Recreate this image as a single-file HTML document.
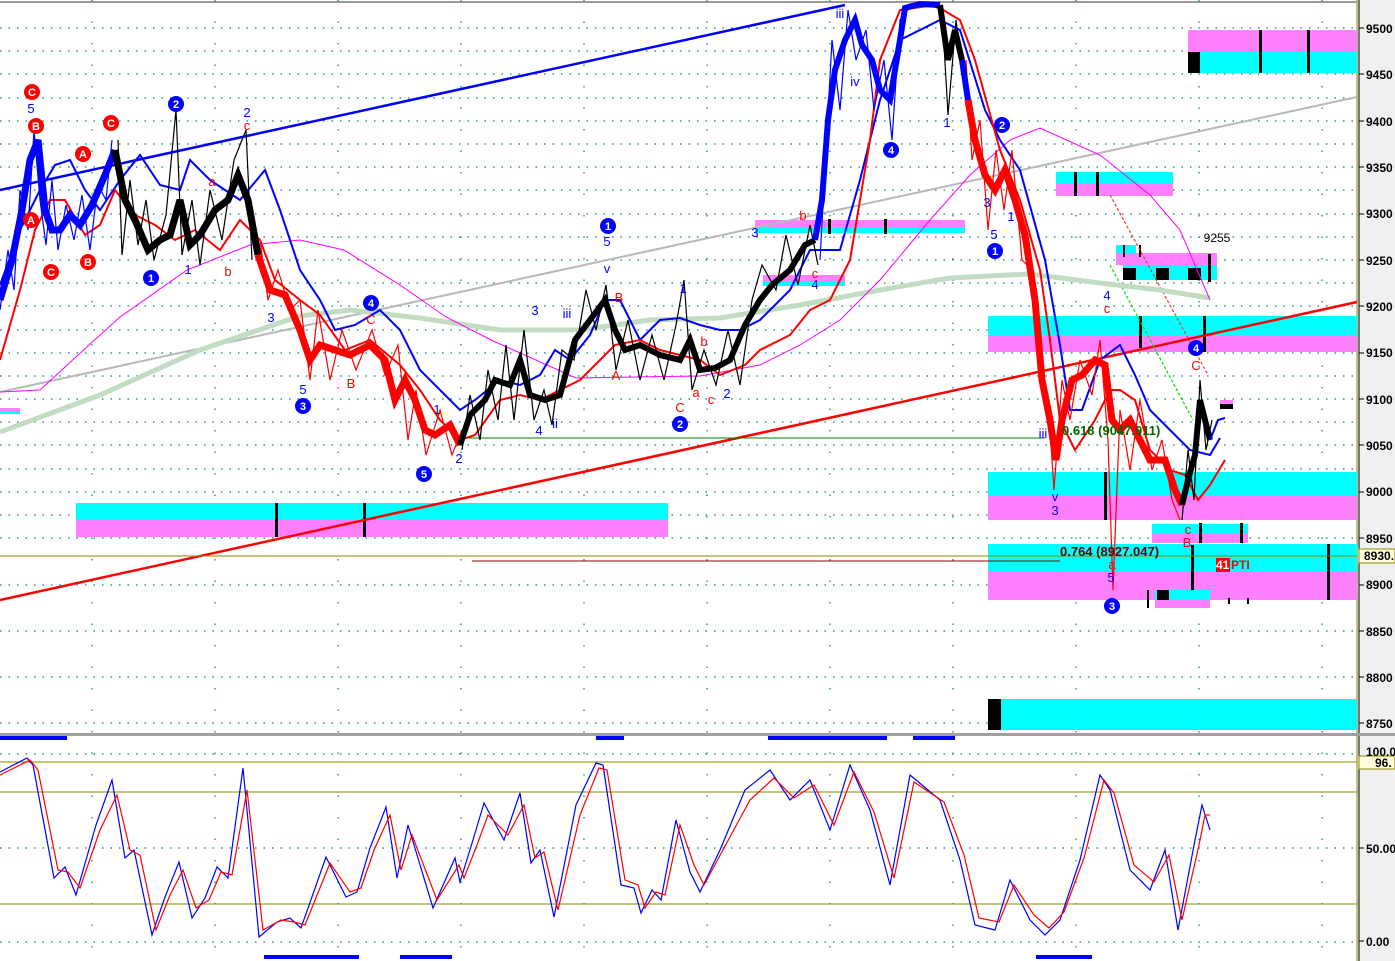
<!DOCTYPE html>
<html><head><meta charset="utf-8"><style>
html,body{margin:0;padding:0;background:#fff;}
svg{display:block;font-family:"Liberation Sans",sans-serif;}
</style></head><body>
<svg width="1395" height="961" viewBox="0 0 1395 961" xmlns="http://www.w3.org/2000/svg">
<rect width="1395" height="961" fill="#fff"/>
<rect x="1357" y="0" width="38" height="961" fill="#f0f0f0"/>
<line x1="1357" y1="0" x2="1357" y2="961" stroke="#8a8a00" stroke-width="1"/>
<line x1="1359" y1="0" x2="1359" y2="961" stroke="#000" stroke-width="1"/>
<line x1="0" y1="2" x2="1357" y2="2" stroke="#999" stroke-width="2"/>
<g stroke="#008080" stroke-width="1.2" stroke-dasharray="1.5 7">
<line x1="0" y1="28" x2="1357" y2="28"/><line x1="0" y1="51" x2="1357" y2="51"/>
<line x1="0" y1="74" x2="1357" y2="74"/><line x1="0" y1="98" x2="1357" y2="98"/>
<line x1="0" y1="121" x2="1357" y2="121"/><line x1="0" y1="144" x2="1357" y2="144"/>
<line x1="0" y1="167" x2="1357" y2="167"/><line x1="0" y1="190" x2="1357" y2="190"/>
<line x1="0" y1="214" x2="1357" y2="214"/><line x1="0" y1="237" x2="1357" y2="237"/>
<line x1="0" y1="260" x2="1357" y2="260"/><line x1="0" y1="283" x2="1357" y2="283"/>
<line x1="0" y1="306" x2="1357" y2="306"/><line x1="0" y1="330" x2="1357" y2="330"/>
<line x1="0" y1="353" x2="1357" y2="353"/><line x1="0" y1="376" x2="1357" y2="376"/>
<line x1="0" y1="399" x2="1357" y2="399"/><line x1="0" y1="422" x2="1357" y2="422"/>
<line x1="0" y1="445" x2="1357" y2="445"/><line x1="0" y1="469" x2="1357" y2="469"/>
<line x1="0" y1="492" x2="1357" y2="492"/><line x1="0" y1="515" x2="1357" y2="515"/>
<line x1="0" y1="538" x2="1357" y2="538"/><line x1="0" y1="585" x2="1357" y2="585"/>
<line x1="0" y1="631" x2="1357" y2="631"/><line x1="0" y1="677" x2="1357" y2="677"/>
<line x1="0" y1="723" x2="1357" y2="723"/>
<line x1="0" y1="754" x2="1357" y2="754"/><line x1="0" y1="848" x2="1357" y2="848"/><line x1="0" y1="942" x2="1357" y2="942"/>
</g>
<g stroke="#008080" stroke-width="1.2" stroke-dasharray="1.5 20">
<line x1="92" y1="0" x2="92" y2="961"/><line x1="215" y1="0" x2="215" y2="961"/>
<line x1="338" y1="0" x2="338" y2="961"/><line x1="461" y1="0" x2="461" y2="961"/>
<line x1="584" y1="0" x2="584" y2="961"/><line x1="707" y1="0" x2="707" y2="961"/>
<line x1="830" y1="0" x2="830" y2="961"/><line x1="953" y1="0" x2="953" y2="961"/>
<line x1="1076" y1="0" x2="1076" y2="961"/><line x1="1199" y1="0" x2="1199" y2="961"/>
<line x1="1322" y1="0" x2="1322" y2="961"/>
</g>
<g>
<rect x="1188" y="30" width="169" height="22" fill="#ff80ff"/><rect x="1188" y="52" width="169" height="21" fill="#00ffff"/>
<rect x="1188" y="52" width="12" height="21" fill="#000"/>
<rect x="1259" y="30" width="3" height="43" fill="#000"/><rect x="1307" y="30" width="3" height="43" fill="#000"/>
<rect x="1056" y="172" width="117" height="12" fill="#00ffff"/><rect x="1056" y="184" width="117" height="12" fill="#ff80ff"/>
<rect x="1074" y="172" width="3" height="24" fill="#000"/><rect x="1096" y="172" width="3" height="24" fill="#000"/>
<rect x="755" y="220" width="210" height="7" fill="#ff80ff"/><rect x="755" y="227" width="210" height="6" fill="#00ffff"/>
<rect x="884" y="219" width="3" height="15" fill="#000"/><rect x="828" y="219" width="3" height="15" fill="#000"/>
<rect x="763" y="275" width="82" height="6" fill="#ff80ff"/><rect x="763" y="281" width="82" height="5" fill="#00ffff"/>
<rect x="1116" y="245" width="20" height="8" fill="#00ffff"/><rect x="1116" y="253" width="101" height="12" fill="#ff80ff"/><rect x="1123" y="265" width="94" height="15" fill="#00ffff"/>
<rect x="1123" y="268" width="13" height="12" fill="#000"/><rect x="1156" y="268" width="13" height="12" fill="#000"/><rect x="1188" y="268" width="13" height="12" fill="#000"/>
<rect x="1123" y="245" width="2" height="12" fill="#000"/><rect x="1139" y="245" width="2" height="12" fill="#000"/><rect x="1208" y="254" width="3" height="28" fill="#000"/>
<rect x="988" y="316" width="369" height="19" fill="#00ffff"/><rect x="988" y="335" width="369" height="17" fill="#ff80ff"/>
<rect x="1139" y="316" width="3" height="32" fill="#000"/><rect x="1203" y="316" width="3" height="36" fill="#000"/>
<rect x="0" y="408" width="20" height="4" fill="#ff80ff"/><rect x="0" y="412" width="20" height="2" fill="#00ffff"/>
<rect x="1220" y="400" width="13" height="4" fill="#ff80ff"/><rect x="1220" y="404" width="13" height="5" fill="#000"/>
<rect x="988" y="472" width="369" height="24" fill="#00ffff"/><rect x="988" y="496" width="369" height="24" fill="#ff80ff"/>
<rect x="1104" y="472" width="3" height="48" fill="#000"/>
<rect x="76" y="503" width="592" height="17" fill="#00ffff"/><rect x="76" y="520" width="592" height="17" fill="#ff80ff"/>
<rect x="275" y="503" width="3" height="34" fill="#000"/><rect x="363" y="503" width="3" height="34" fill="#000"/>
<rect x="1152" y="524" width="96" height="10" fill="#00ffff"/><rect x="1152" y="534" width="96" height="9" fill="#ff80ff"/>
<rect x="1199" y="523" width="3" height="20" fill="#000"/><rect x="1240" y="523" width="3" height="20" fill="#000"/>
<rect x="988" y="544" width="369" height="27" fill="#00ffff"/><rect x="988" y="571" width="369" height="29" fill="#ff80ff"/>
<rect x="1327" y="544" width="3" height="56" fill="#000"/><rect x="1191" y="545" width="3" height="45" fill="#000"/>
<rect x="1155" y="590" width="55" height="10" fill="#00ffff"/><rect x="1155" y="600" width="55" height="8" fill="#ff80ff"/>
<rect x="1157" y="590" width="12" height="10" fill="#000"/><rect x="1147" y="590" width="2" height="18" fill="#000"/>
<rect x="1228" y="598" width="2" height="6" fill="#000"/><rect x="1247" y="598" width="2" height="6" fill="#000"/>
<rect x="988" y="699" width="369" height="31" fill="#00ffff"/><rect x="988" y="699" width="13" height="31" fill="#000"/>
</g>
<line x1="0" y1="190" x2="845" y2="5" stroke="#0000ff" stroke-width="2.5"/>
<line x1="0" y1="392" x2="1357" y2="97" stroke="#b8b8b8" stroke-width="2"/>
<line x1="0" y1="600" x2="1357" y2="302" stroke="#ff0000" stroke-width="2.5"/>
<line x1="0" y1="556" x2="1357" y2="556" stroke="#8a8a00" stroke-width="1"/>
<line x1="472" y1="561" x2="1060" y2="561" stroke="#8b0000" stroke-width="1"/>
<line x1="460" y1="438" x2="1045" y2="438" stroke="#008000" stroke-width="1"/>
<line x1="1110" y1="195" x2="1208" y2="375" stroke="#ff3030" stroke-width="1.2" stroke-dasharray="3 2"/>
<line x1="1110" y1="265" x2="1193" y2="420" stroke="#00dd00" stroke-width="1.2" stroke-dasharray="3 2"/>
<polyline fill="none" stroke="#c2dcc2" stroke-width="5" points="0,432 100,395 200,350 300,316 350,310 420,318 500,330 580,330 650,320 720,318 800,305 880,290 950,278 1030,274 1100,283 1160,290 1210,298"/>
<polyline fill="none" stroke="#ff00ff" stroke-width="1" points="0,392 40,390 89,345 120,317 187,270 250,245 300,240 344,250 400,285 446,317 491,340 576,378 700,376 760,365 800,345 840,320 880,280 930,220 970,175 1010,140 1040,128 1100,155 1150,195 1180,230 1210,300"/>
<polyline fill="none" stroke="#0000ff" stroke-width="2" points="0,285 20,230 40,190 55,165 70,160 85,190 100,210 120,180 140,155 160,185 180,190 190,160 210,180 240,200 265,170 280,210 300,270 320,300 335,330 355,325 380,310 400,330 420,370 440,390 460,410 475,400 500,380 520,385 540,375 555,350 570,360 590,335 605,300 620,300 640,340 660,320 680,318 700,325 720,330 740,330 760,320 790,290 810,250 840,250 860,180 880,100 900,40 940,20 960,30 985,110 1000,140 1020,170 1045,260 1060,345 1070,410 1082,410 1100,360 1120,345 1135,375 1150,410 1170,430 1190,450 1210,455 1220,438"/>
<polyline fill="none" stroke="#ff0000" stroke-width="2" points="0,360 20,290 35,230 50,200 65,200 85,235 100,225 115,190 135,215 155,225 175,240 195,230 220,250 240,220 260,240 275,280 300,300 320,315 345,350 370,340 400,365 420,390 440,420 460,440 475,435 500,400 520,395 540,400 560,390 580,380 600,360 615,345 640,340 660,350 700,360 720,375 745,365 760,350 790,335 810,310 830,300 850,260 870,140 880,60 900,10 935,5 960,20 975,60 1000,150 1020,200 1040,270 1050,340 1060,420 1075,450 1095,420 1110,390 1120,390 1135,400 1150,450 1170,470 1185,475 1198,500 1210,485 1225,460"/>
<!-- price wicks (thin, wide range) -->
<g fill="none" stroke-width="1.2">
<polyline stroke="#0000ff" points="0,310 8,250 14,290 20,190 28,230 34,130 40,200 46,245 52,180 58,250 66,205 74,240 82,195 90,250 98,185 106,200 112,140"/>
<polyline stroke="#000" points="118,140 122,255 130,180 138,245 146,200 154,260 166,215 176,110 182,255 192,200 200,265 210,190 222,240 234,160 246,130 252,260"/>
<polyline stroke="#ff0000" points="260,240 268,300 278,270 290,310 300,300 310,380 318,310 330,380 342,330 356,370 372,330 385,375 398,345 408,440 416,390 426,455 440,410 452,455 462,430"/>
<polyline stroke="#000" points="462,450 470,395 480,440 488,370 498,420 506,345 514,420 524,330 534,420 544,390 552,425 562,350 574,360 586,290 596,330 606,285 616,370 628,320 640,380 652,335 664,380 676,325 684,280 692,390 704,350 716,385 728,330 740,385 752,300 762,265 776,290 786,235 798,285 810,225 818,265"/>
<polyline stroke="#0000ff" points="820,260 826,150 832,40 840,110 848,10 856,60 866,30 874,110 884,60 892,140 900,20 910,4 925,4 938,8"/>
<polyline stroke="#000" points="942,10 948,115 956,20 962,70"/>
<polyline stroke="#ff0000" points="966,60 972,160 980,120 988,230 996,150 1004,210 1012,150 1022,260 1032,270 1040,380 1048,400 1054,490 1062,380 1070,420 1080,360 1092,395 1100,340 1108,440 1113,590 1120,410 1130,470 1140,400 1152,470 1162,440 1172,500 1180,520"/>
<polyline stroke="#000" points="1182,520 1188,450 1194,500 1200,380 1206,450 1212,420"/>
</g>
<!-- price bodies (approximation) -->
<polyline fill="none" stroke="#0000ff" stroke-width="7" points="0,300 12,260 22,210 30,160 38,140 45,210 52,230 60,230 70,215 80,225 92,205 105,175 115,150"/>
<polyline fill="none" stroke="#000" stroke-width="7" points="115,150 125,200 135,220 148,250 160,240 170,235 180,200 190,245 200,235 215,210 228,200 238,175 248,200 258,255"/>
<polyline fill="none" stroke="#ff0000" stroke-width="7" points="258,255 270,290 285,295 300,330 310,360 320,345 335,350 350,355 370,345 385,360 395,400 405,380 415,400 425,430 435,435 450,425 460,445"/>
<polyline fill="none" stroke="#000" stroke-width="6" points="460,445 470,415 485,400 495,380 510,385 520,360 530,395 545,400 560,395 575,340 590,320 605,300 615,330 625,350 640,345 660,355 680,360 690,340 700,370 715,368 730,360 745,325 760,300 772,285 790,270 805,245 815,240"/>
<polyline fill="none" stroke="#0000ff" stroke-width="6" points="815,240 822,200 828,120 835,70 845,40 855,20 862,45 872,60 880,90 890,100 900,40 905,8 920,4 940,5"/>
<polyline fill="none" stroke="#000" stroke-width="6" points="940,5 948,60 955,30 962,60"/>
<polyline fill="none" stroke="#0000ff" stroke-width="6" points="962,60 968,100"/>
<polyline fill="none" stroke="#ff0000" stroke-width="7" points="968,100 975,140 985,175 995,190 1005,170 1015,200 1025,235 1035,300 1042,380 1050,420 1056,460 1062,420 1072,380 1082,375 1095,360 1105,365 1112,420 1120,430 1130,420 1140,440 1150,460 1165,460 1175,490 1182,505"/>
<polyline fill="none" stroke="#000" stroke-width="6" points="1182,505 1188,480 1195,455 1200,400 1205,420 1210,440"/>
<polyline fill="none" stroke="#0000ff" stroke-width="2" points="1210,440 1218,420 1225,418"/>
<g font-size="13" text-anchor="middle" font-weight="bold">
<g fill="#ff0000"><circle cx="32" cy="92" r="8"/><circle cx="36" cy="126" r="8"/><circle cx="111" cy="123" r="8"/><circle cx="83" cy="154" r="8"/><circle cx="31" cy="220" r="8"/><circle cx="51" cy="272" r="8"/><circle cx="88" cy="262" r="8"/></g>
<g fill="#fff" font-size="11"><text x="32" y="96">C</text><text x="36" y="130">B</text><text x="111" y="127">C</text><text x="83" y="158">A</text><text x="31" y="224">A</text><text x="51" y="276">C</text><text x="88" y="266">B</text></g>
<g fill="#0000ff"><circle cx="176" cy="104" r="8"/><circle cx="151" cy="278" r="8"/><circle cx="371" cy="303" r="8"/><circle cx="303" cy="406" r="8"/><circle cx="424" cy="474" r="8"/><circle cx="608" cy="226" r="8"/><circle cx="680" cy="424" r="8"/><circle cx="891" cy="150" r="8"/><circle cx="1002" cy="125" r="8"/><circle cx="995" cy="251" r="8"/><circle cx="1196" cy="348" r="8"/><circle cx="1112" cy="606" r="8"/></g>
<g fill="#fff" font-size="11"><text x="176" y="108">2</text><text x="151" y="282">1</text><text x="371" y="307">4</text><text x="303" y="410">3</text><text x="424" y="478">5</text><text x="608" y="230">1</text><text x="680" y="428">2</text><text x="891" y="154">4</text><text x="1002" y="129">2</text><text x="995" y="255">1</text><text x="1196" y="352">4</text><text x="1112" y="610">3</text></g>
<g fill="#0000ff" font-weight="normal"><text x="31" y="113">5</text><text x="247" y="117">2</text><text x="188" y="274">1</text><text x="271" y="322">3</text><text x="303" y="394">5</text><text x="459" y="463">2</text><text x="437" y="414">1</text><text x="535" y="315">3</text><text x="539" y="435">4</text><text x="555" y="428">ii</text><text x="567" y="318">iii</text><text x="607" y="246">5</text><text x="607" y="273">v</text><text x="683" y="293">1</text><text x="727" y="398">2</text><text x="755" y="237">3</text><text x="840" y="18">iii</text><text x="855" y="86">iv</text><text x="947" y="127">1</text><text x="987" y="207">3</text><text x="1011" y="221">1</text><text x="994" y="239">5</text><text x="1107" y="300">4</text><text x="1055" y="501">v</text><text x="1055" y="515">3</text><text x="1043" y="438">iii</text><text x="1111" y="582">5</text><text x="815" y="289">4</text></g>
<g fill="#ff0000" font-weight="normal"><text x="247" y="130">c</text><text x="212" y="186">a</text><text x="228" y="276">b</text><text x="371" y="324">C</text><text x="351" y="388">B</text><text x="616" y="380">A</text><text x="619" y="302">B</text><text x="680" y="412">C</text><text x="696" y="397">a</text><text x="704" y="346">b</text><text x="711" y="404">c</text><text x="803" y="220">b</text><text x="815" y="278">c</text><text x="1107" y="313">c</text><text x="1196" y="370">C</text><text x="1188" y="534">c</text><text x="1187" y="547">B</text><text x="1112" y="569">a</text></g>
</g>
<text x="1217" y="242" font-size="12" text-anchor="middle">9255</text>
<text x="1062" y="435" font-size="13" fill="#006600" font-weight="bold">0.618 (9047.911)</text>
<text x="1060" y="556" font-size="13" fill="#660000" font-weight="bold">0.764 (8927.047)</text>
<rect x="1216" y="558" width="14" height="14" fill="#ff0000"/>
<text x="1216" y="569" font-size="12" fill="#fff" font-weight="bold">41</text>
<text x="1231" y="569" font-size="12" fill="#ff0000" font-weight="bold">PTI</text>
<g font-size="12" fill="#000" font-weight="bold">
<text x="1366" y="33">9500</text><text x="1366" y="79">9450</text><text x="1366" y="126">9400</text><text x="1366" y="172">9350</text><text x="1366" y="218">9300</text><text x="1366" y="265">9250</text><text x="1366" y="311">9200</text><text x="1366" y="357">9150</text><text x="1366" y="404">9100</text><text x="1366" y="450">9050</text><text x="1366" y="496">9000</text><text x="1366" y="543">8950</text><text x="1366" y="589">8900</text><text x="1366" y="636">8850</text><text x="1366" y="682">8800</text><text x="1366" y="728">8750</text>
<text x="1366" y="853">50.00</text><text x="1366" y="946">0.00</text>
</g>
<g stroke="#000"><line x1="1359" y1="28" x2="1364" y2="28"/><line x1="1359" y1="74" x2="1364" y2="74"/><line x1="1359" y1="121" x2="1364" y2="121"/><line x1="1359" y1="167" x2="1364" y2="167"/><line x1="1359" y1="214" x2="1364" y2="214"/><line x1="1359" y1="260" x2="1364" y2="260"/><line x1="1359" y1="306" x2="1364" y2="306"/><line x1="1359" y1="353" x2="1364" y2="353"/><line x1="1359" y1="399" x2="1364" y2="399"/><line x1="1359" y1="445" x2="1364" y2="445"/><line x1="1359" y1="492" x2="1364" y2="492"/><line x1="1359" y1="538" x2="1364" y2="538"/><line x1="1359" y1="585" x2="1364" y2="585"/><line x1="1359" y1="631" x2="1364" y2="631"/><line x1="1359" y1="677" x2="1364" y2="677"/><line x1="1359" y1="723" x2="1364" y2="723"/><line x1="1359" y1="848" x2="1364" y2="848"/><line x1="1359" y1="941" x2="1364" y2="941"/></g>
<rect x="1359" y="549" width="36" height="14" fill="#ffffe0" stroke="#8a8a00"/>
<text x="1364" y="560" font-size="12" font-weight="bold">8930.</text>
<rect x="1359" y="756" width="36" height="13" fill="#ffffe0" stroke="#8a8a00"/>
<text x="1375" y="767" font-size="12" font-weight="bold">96.</text>
<text x="1366" y="756" font-size="12" font-weight="bold">100.0</text>
<rect x="0" y="733" width="1395" height="3" fill="#a0a0a0"/>
<line x1="0" y1="762" x2="1357" y2="762" stroke="#8a8a00"/>
<line x1="0" y1="792" x2="1357" y2="792" stroke="#8a8a00"/>
<line x1="0" y1="904" x2="1357" y2="904" stroke="#8a8a00"/>
<polyline fill="none" stroke="#0000ff" stroke-width="1.2" points="0,772 27,758 33,765 54,878 65,867 76,895 96,825 112,780 125,858 134,850 152,935 165,897 179,862 192,918 205,898 217,867 228,878 243,768 259,937 277,922 290,918 301,928 326,857 346,897 357,892 370,848 386,807 397,878 408,825 433,908 455,858 460,882 473,840 484,803 504,840 520,793 531,863 540,850 554,917 576,805 596,763 603,765 621,885 634,888 641,913 652,890 661,900 676,820 690,872 700,892 720,850 745,790 770,770 790,800 810,780 830,830 850,765 870,810 890,885 910,775 940,800 960,860 975,925 995,930 1010,880 1030,920 1045,935 1060,920 1080,860 1100,775 1110,790 1130,870 1150,890 1165,850 1178,930 1195,840 1202,805 1210,830"/>
<polyline fill="none" stroke="#ff0000" stroke-width="1.2" points="0,775 30,760 38,770 58,870 68,872 80,888 100,830 117,795 130,850 140,855 156,930 170,895 183,870 196,908 209,900 221,872 232,875 247,790 263,930 281,920 294,922 305,925 330,863 350,892 361,888 374,850 390,815 401,870 412,835 437,900 459,865 464,878 477,845 488,815 508,835 524,805 535,858 544,852 558,910 580,815 599,768 607,770 625,880 638,885 645,908 656,892 665,895 680,825 694,865 704,885 724,848 750,800 774,778 794,798 814,785 834,825 854,772 874,812 894,878 914,782 944,802 964,855 979,918 999,922 1014,885 1034,915 1049,928 1064,912 1084,858 1104,780 1114,793 1134,865 1154,882 1169,855 1182,920 1199,845 1205,815 1210,815"/>
<g fill="#0000ff">
<rect x="0" y="736" width="67" height="4"/><rect x="596" y="736" width="28" height="4"/><rect x="768" y="736" width="119" height="4"/><rect x="913" y="736" width="42" height="4"/>
<rect x="264" y="955" width="95" height="4"/><rect x="400" y="955" width="52" height="4"/><rect x="1036" y="955" width="56" height="4"/>
</g>
</svg>
</body></html>
